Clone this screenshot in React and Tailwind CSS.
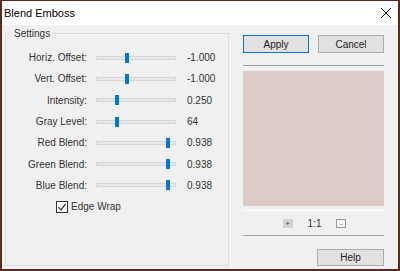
import React from 'react';

const rows = [
  { label: 'Horiz. Offset:', pos: 29, value: '-1.000' },
  { label: 'Vert. Offset:', pos: 29, value: '-1.000' },
  { label: 'Intensity:', pos: 19, value: '0.250' },
  { label: 'Gray Level:', pos: 19, value: '64' },
  { label: 'Red Blend:', pos: 70, value: '0.938' },
  { label: 'Green Blend:', pos: 70, value: '0.938' },
  { label: 'Blue Blend:', pos: 70, value: '0.938' },
];

function Slider({ pos }) {
  return (
    <div className="relative w-[80px] h-[12px] flex items-center">
      <div className="w-full h-[4px] bg-[#e7e7e7] border border-[#d6d6d6]" />
      {/* thumb */}
      <div className="absolute top-[1px] w-[4px] h-[10px] bg-[#0078d7]" style={{ left: pos }} />
    </div>
  );
}

export default function App() {
  return (
    <div className="w-[400px] h-[271px] flex flex-col bg-[#f0f0f0] border-x-2 border-b-2 border-t border-[#5a2a1f] font-['Liberation_Sans',Arial,sans-serif] text-[10px] text-[#222] overflow-hidden">
      {/* Title bar */}
      <div className="h-[24px] bg-white flex items-center justify-between pl-[2px] pr-[6px]">
        <span className="text-[11px] text-black">Blend Emboss</span>
        <svg width="12" height="12" viewBox="0 0 12 12">
          <path d="M1 1L11 11M11 1L1 11" stroke="#111" strokeWidth="1" />
        </svg>
      </div>

      <div className="flex-1 flex pl-[3px] pt-[1px]">
        {/* Settings group */}
        <fieldset className="w-[224px] h-[240px] border border-[#dcdcdc] rounded-none">
          <legend className="ml-[6px] px-[2px] text-[#333]">Settings</legend>
          <div className="flex flex-col pt-[6px]">
            {rows.map((r) => (
              <div key={r.label} className="flex items-center h-[21.3px]">
                <span className="w-[81px] text-right text-[#333]">{r.label}</span>
                <div className="ml-[9px]">
                  <Slider pos={r.pos} />
                </div>
                <span className="ml-[11px] text-[#333]">{r.value}</span>
              </div>
            ))}
            <div className="flex items-center h-[21px] pl-[50px]">
              <div className="w-[12px] h-[12px] border border-[#333] bg-white flex items-center justify-center">
                <svg width="10" height="10" viewBox="0 0 10 10">
                  <path d="M1.5 5.2L4 7.8L8.6 1.8" stroke="#222" strokeWidth="1.1" fill="none" />
                </svg>
              </div>
              <span className="ml-[3px] text-[#333]">Edge Wrap</span>
            </div>
          </div>
        </fieldset>

        {/* Right column */}
        <div className="w-[141px] ml-[14px] pt-[9px] flex flex-col">
          <div className="flex justify-between">
            <button className="w-[66px] h-[18px] bg-[#e1e1e1] border border-[#0078d7] text-[#222]">Apply</button>
            <button className="w-[66px] h-[18px] bg-[#e1e1e1] border border-[#adadad] text-[#222]">Cancel</button>
          </div>
          <div className="mt-[12px] h-[1px] bg-[#a0a0a0]" />
          <div className="mt-[5px] h-[135px] bg-[#dbccc8]" />
          <div className="mt-[4px] h-[1px] bg-white" />
          <div className="mt-[8px] flex items-center justify-center gap-[15px] h-[9px] pl-[2px]">
            <div className="w-[10px] h-[9px] bg-[#d2d2d2] flex items-center justify-center text-[8px] text-[#555] leading-none">+</div>
            <span className="text-[#333] leading-none">1:1</span>
            <div className="w-[10px] h-[9px] bg-[#f4f4f4] border border-[#999] flex items-center justify-center text-[8px] text-[#555] leading-none">-</div>
          </div>
          <div className="mt-[7px] h-[1px] bg-[#a0a0a0]" />
          <div className="mt-[13px] flex justify-end">
            <button className="w-[67px] h-[17px] bg-[#e1e1e1] border border-[#adadad] text-[#222]">Help</button>
          </div>
        </div>
      </div>
    </div>
  );
}
